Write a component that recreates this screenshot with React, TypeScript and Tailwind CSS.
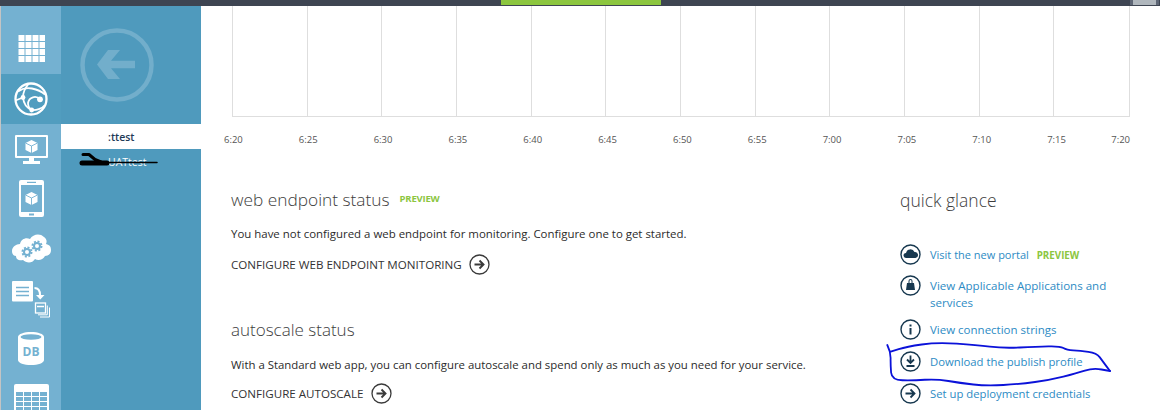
const font = { fontFamily: '"Open Sans", "Noto Sans", sans-serif' };

function smooth(p: number[][]) {
  let d = `M${p[0][0]} ${p[0][1]}`;
  for (let i = 1; i < p.length - 1; i++) {
    const mx = (p[i][0] + p[i + 1][0]) / 2;
    const my = (p[i][1] + p[i + 1][1]) / 2;
    d += `Q${p[i][0]} ${p[i][1]} ${mx} ${my}`;
  }
  const l = p[p.length - 1];
  return d + `L${l[0]} ${l[1]}`;
}

const scribbleA = [[887.3, 345], [890.7, 351.7], [890.5, 365], [891.7, 380], [913, 380.5], [936.7, 379], [960, 383], [986.7, 386], [1020, 384], [1050, 380], [1076.7, 373.3], [1093, 368], [1110, 371]];
const scribbleB = [[1110, 371], [1103, 361.7], [1096.7, 353], [1080, 350.7], [1066.7, 350], [1060, 346], [1036.7, 346.7], [1003, 348.3], [976.7, 345], [936.7, 342.3], [906.7, 346.7], [890.7, 351.7]];

function Arrow() {
  return (
    <svg viewBox="0 0 21 21" className="w-[21px] h-[21px]" fill="none" stroke="#3a3a3a" strokeWidth="1.3">
      <circle cx="10.5" cy="10.5" r="9.5" />
      <path d="M5.5 10.5h9M10.5 6.5l4 4-4 4" strokeWidth="1.9" />
    </svg>
  );
}

function Ring({ children }: { children: React.ReactNode }) {
  return (
    <svg viewBox="0 0 21 21" className="w-[21px] h-[21px] shrink-0" fill="none" stroke="#17384f" strokeWidth="1.4">
      <circle cx="10.5" cy="10.5" r="9.5" />
      {children}
    </svg>
  );
}

function Link({ icon, children, top, size }: { icon: React.ReactNode; children: React.ReactNode; top?: string; size?: string }) {
  return (
    <div className={`flex items-start gap-[9px] ${top ?? ""}`}>
      {icon}
      <div className={`${size ?? "text-[11.3px]"} leading-[17px] text-[#2d8bc4] pt-[2px]`}>{children}</div>
    </div>
  );
}

const labels = ["6:20", "6:25", "6:30", "6:35", "6:40", "6:45", "6:50", "6:55", "7:00", "7:05", "7:10", "7:15"];

export default function App() {
  return (
    <div className="w-[1160px] h-[410px] overflow-hidden relative flex flex-col bg-white" style={font}>
      <div className="h-[6px] shrink-0 bg-[#3e4552] flex">
        <div className="w-[501px]" />
        <div className="w-[160px] h-[5px] bg-[#8cc63f]" />
        <div className="flex-1" />
        <div className="w-[3px] h-[5px] bg-[#5e6675]" />
        <div className="w-[23px] h-[5px] bg-[#b0b7bd]" />
        <div className="w-[3px] h-[5px] bg-[#5e6675]" />
        <div className="w-px" />
      </div>
      <div className="flex flex-1 min-h-0">
        <div className="w-px bg-[#c4c4c4] shrink-0" />
        <div className="w-[60px] shrink-0 bg-[#74b1d1] flex flex-col items-center">
          <div className="w-full h-[68px] shrink-0 pt-[29px] flex justify-center">
            <svg viewBox="0 0 27 27" className="w-[27px] h-[27px]" fill="#fff">
              {[0, 1, 2, 3].flatMap((r) =>
                [0, 1, 2, 3].map((c) => <rect key={`${r}${c}`} x={c * 7 + 0.5} y={r * 7} width="6" height="6" />)
              )}
            </svg>
          </div>
          <div className="w-full h-[50px] shrink-0 bg-[#519dbf] flex items-center justify-center">
            <svg viewBox="0 0 34 34" className="w-[34px] h-[34px]" fill="none" stroke="#fff" strokeWidth="1.8">
              <circle cx="17" cy="17" r="15.5" strokeWidth="2.3" />
              <path d="M4 9.500C8 6.500 13 5.500 18 6.500C23 7.500 27.500 9.500 31 12.500" />
              <path d="M14.500 2C11 6 9 11 9 15.500C9.500 21 13 26 17.700 28" />
              <path d="M26 17.300C22 13 15 15 14 21C14 24 16 27 17.700 28" />
              <path d="M17.700 28C22 28.500 28 27 31 23" />
              <path d="M1.500 18.500L9 15.500" />
              <circle cx="26" cy="17.300" r="2.900" fill="#fff" stroke="none" />
              <circle cx="17.700" cy="28" r="2.400" fill="#fff" stroke="none" />
              <circle cx="9" cy="15.500" r="2.400" fill="#fff" stroke="none" />
            </svg>
          </div>
          <svg viewBox="0 0 33 30" className="w-[33px] h-[30px] mt-[11px] shrink-0" fill="#fff">
            <path fillRule="evenodd" d="M1 0h31a1 1 0 0 1 1 1v21a1 1 0 0 1-1 1H1a1 1 0 0 1-1-1V1a1 1 0 0 1 1-1zM2 2v19h29V2z" />
            <path d="M14 23h5v3h6v3H8v-3h6z" />
            <path d="M16.500 5l6 3v7l-6 3-6-3V8z" />
            <path d="M10.500 8l6 3 6-3M16.500 11v7" fill="none" stroke="#74b1d1" strokeWidth=".9" />
          </svg>
          <svg viewBox="0 0 25 37" className="w-[25px] h-[37px] mt-[15px] shrink-0" fill="#fff">
            <path fillRule="evenodd" d="M2 0h21a2 2 0 0 1 2 2v33a2 2 0 0 1-2 2H2a2 2 0 0 1-2-2V2a2 2 0 0 1 2-2zM2 5v27h21V5z" />
            <path d="M8 1.800h9v1.200H8z" fill="#74b1d1" />
            <path d="M10 33.500h5v2h-5z" fill="#74b1d1" />
            <path d="M12.500 12l6 3v7l-6 3-6-3v-7z" />
            <path d="M6.500 15l6 3 6-3M12.500 18v7" fill="none" stroke="#74b1d1" strokeWidth=".9" />
          </svg>
          <svg viewBox="0 0 39 32" className="w-[39px] h-[32px] mt-[16px] shrink-0">
            <path fill="#fff" d="M8 11c1-5 6-7 10-5 3-5 10-6 14-2 3 2 3 5 2 7 4 1 5 3 5 6 0 4-3 6-6 6-2 4-7 5-10 3-3 5-9 4-12 1-3 1-7 0-7-4-3 0-4-3-4-5 0-4 4-7 8-7z" />
            <circle cx="15" cy="19" r="3" fill="none" stroke="#74b1d1" strokeWidth="2" />
            <circle cx="15" cy="19" r="4.600" fill="none" stroke="#74b1d1" strokeWidth="1.800" strokeDasharray="2 1.600" />
            <circle cx="25" cy="13" r="3" fill="none" stroke="#74b1d1" strokeWidth="2" />
            <circle cx="25" cy="13" r="4.600" fill="none" stroke="#74b1d1" strokeWidth="1.800" strokeDasharray="2 1.600" />
          </svg>
          <svg viewBox="0 0 39 37" className="w-[39px] h-[37px] mt-[16px] shrink-0">
            <rect x="0" y="0" width="21" height="20.500" rx="1" fill="#fff" />
            <path d="M4 6.500h13M4 10.500h13M4 14.500h13" stroke="#74b1d1" strokeWidth="1.700" />
            <path d="M22.500 7c3.500 0 5.500 2.500 5.500 7" fill="none" stroke="#fff" strokeWidth="2" />
            <path d="M24 14h8.500l-4.250 4.500z" fill="#fff" />
            <rect x="23.500" y="22" width="10" height="10" fill="none" stroke="#fff" strokeWidth="1.300" />
            <path d="M35.300 24.500V33.800H26M37.500 26.500V36H28" fill="none" stroke="#fff" strokeWidth="1" />
            <path d="M25 25.500h7" stroke="#fff" strokeWidth="1.500" />
          </svg>
          <svg viewBox="0 0 26 33" className="w-[26px] h-[33px] mt-[14px] shrink-0">
            <path fill="#fff" d="M0 5c0-3 6-5 13-5s13 2 13 5v23c0 3-6 5-13 5S0 31 0 28z" />
            <ellipse cx="13" cy="5" rx="10.500" ry="2.800" fill="#74b1d1" />
            <text x="13" y="24" textAnchor="middle" fontSize="12" fontWeight="700" fill="#74b1d1" style={font}>DB</text>
          </svg>
          <div className="mt-[19px] w-[35px] h-[40px] bg-white rounded-t-[2px] shrink-0 pt-[8px] px-[2px]">
            <div className="grid grid-cols-4 gap-[1px]">
              {Array.from({ length: 16 }).map((_, i) => (
                <div key={i} className="h-[4px] bg-[#74b1d1]" />
              ))}
            </div>
          </div>
        </div>
        <div className="w-[140px] shrink-0 bg-[#4f9abd] flex flex-col">
          <div className="h-[118px] shrink-0 pl-[19px] pt-[22px]">
            <svg viewBox="0 0 74 74" className="w-[74px] h-[74px]" fill="none" stroke="#72aecb">
              <circle cx="37" cy="37" r="34.500" strokeWidth="4.500" />
              <path fill="#72aecb" stroke="none" d="M17 36.500L28 22H40L31 32.700H55V40.300H31L40 51H28Z" />
            </svg>
          </div>
          <div className="h-[25px] shrink-0 bg-white flex items-center pl-[47px] pt-[2px] text-[10.5px] font-semibold text-[#1e3a57]">
            :ttest
          </div>
          <div className="h-[24px] shrink-0 pl-[47px] pt-[5px] text-[10.5px] leading-[16px] text-white">UATtest</div>
        </div>
        <div className="flex-1 min-w-0 flex flex-col pl-[30px]">
          <div className="ml-[1px] w-[898px] h-[111px] border-l border-r border-b border-[#dedede] grid grid-cols-12 shrink-0">
            {labels.map((l, i) => (
              <div key={l} className={i < 11 ? "border-r border-[#dedede]" : ""} />
            ))}
          </div>
          <div className="ml-[1px] w-[898px] h-[20px] mt-[16px] grid grid-cols-12 text-[9.500px] text-[#555] shrink-0 relative">
            {labels.map((l) => (
              <div key={l} className="ml-[-8px] leading-[14px]">{l}</div>
            ))}
            <div className="absolute right-0 top-0 leading-[14px]">7:20</div>
          </div>
          <div className="flex flex-1 min-h-0 mt-[34px]">
            <div className="w-[669px]">
              <div className="flex items-start">
                <span className="text-[17.300px] leading-[26px] font-light text-[#3d3d3d]">web endpoint status</span>
                <span className="ml-[10px] text-[9.500px] font-bold text-[#8cc63f] leading-[14px] mt-[5px] tracking-[-0.2px]">PREVIEW</span>
              </div>
              <p className="mt-[12px] text-[11.450px] leading-[17px] text-[#2b2b2b]">
                You have not configured a web endpoint for monitoring. Configure one to get started.
              </p>
              <div className="mt-[12px] flex items-center gap-[7px] text-[11.600px] text-[#333]">
                <span>CONFIGURE WEB ENDPOINT MONITORING</span>
                <Arrow />
              </div>
              <h2 className="mt-[42px] text-[17px] leading-[26px] font-light text-[#3d3d3d]">autoscale status</h2>
              <p className="mt-[13px] text-[11.400px] leading-[17px] text-[#2b2b2b]">
                With a Standard web app, you can configure autoscale and spend only as much as you need for your service.
              </p>
              <div className="mt-[10px] flex items-center gap-[8px] text-[11.600px] text-[#333]">
                <span>CONFIGURE AUTOSCALE</span>
                <Arrow />
              </div>
            </div>
            <div className="w-[220px]">
              <div className="text-[17.500px] leading-[26px] font-light text-[#3d3d3d]">quick glance</div>
              <div className="mt-[31px] flex flex-col">
                <Link size="text-[11px]" icon={<Ring><path fill="#17384f" stroke="none" d="M6 14a2.500 2.500 0 0 1 0-5 4.500 4.500 0 0 1 8.500-1 3 3 0 0 1 1 6z" /></Ring>}>
                  Visit the new portal <span className="ml-[5px] text-[9.800px] font-bold text-[#8cc63f]">PREVIEW</span>
                </Link>
                <Link size="text-[11.550px]" top="mt-[10px]" icon={<Ring><path fill="#17384f" stroke="none" d="M7 8h7l1 7H6zM8.500 8V6a2 2 0 0 1 4 0v2h-1V6a1 1 0 0 0-2 0v2z" /></Ring>}>
                  View Applicable Applications and services
                </Link>
                <Link size="text-[11.500px]" top="mt-[8px]" icon={<Ring><path d="M10.500 9v6.500M10.500 5.500v2" strokeWidth="2" /></Ring>}>
                  View connection strings
                </Link>
                <Link top="mt-[11px]" icon={<Ring><path d="M10.500 4.500v7.500M7 8.500l3.500 3.500L14 8.500M6.500 15h8" strokeWidth="1.800" /></Ring>}>
                  Download the publish profile
                </Link>
                <Link top="mt-[11px]" icon={<Ring><path d="M5.500 10.500h9M10.500 6.500l4 4-4 4" strokeWidth="1.800" /></Ring>}>
                  Set up deployment credentials
                </Link>
              </div>
            </div>
          </div>
        </div>
      </div>
      <svg className="absolute left-0 top-0 w-[1160px] h-[410px] pointer-events-none" viewBox="0 0 1160 410" fill="none" strokeLinejoin="round" strokeLinecap="round">
        <path d="M83 154.500h6l6 5 6 2.500" stroke="#000" strokeWidth="3" />
        <path d="M82 163h25" stroke="#000" strokeWidth="5" />
        <path d="M105 162.500h52" stroke="#000" strokeWidth="1.500" />
        <path d={smooth(scribbleA)} stroke="#0b12d9" strokeWidth="1.800" />
        <path d={smooth(scribbleB)} stroke="#0b12d9" strokeWidth="1.800" />
      </svg>
    </div>
  );
}
